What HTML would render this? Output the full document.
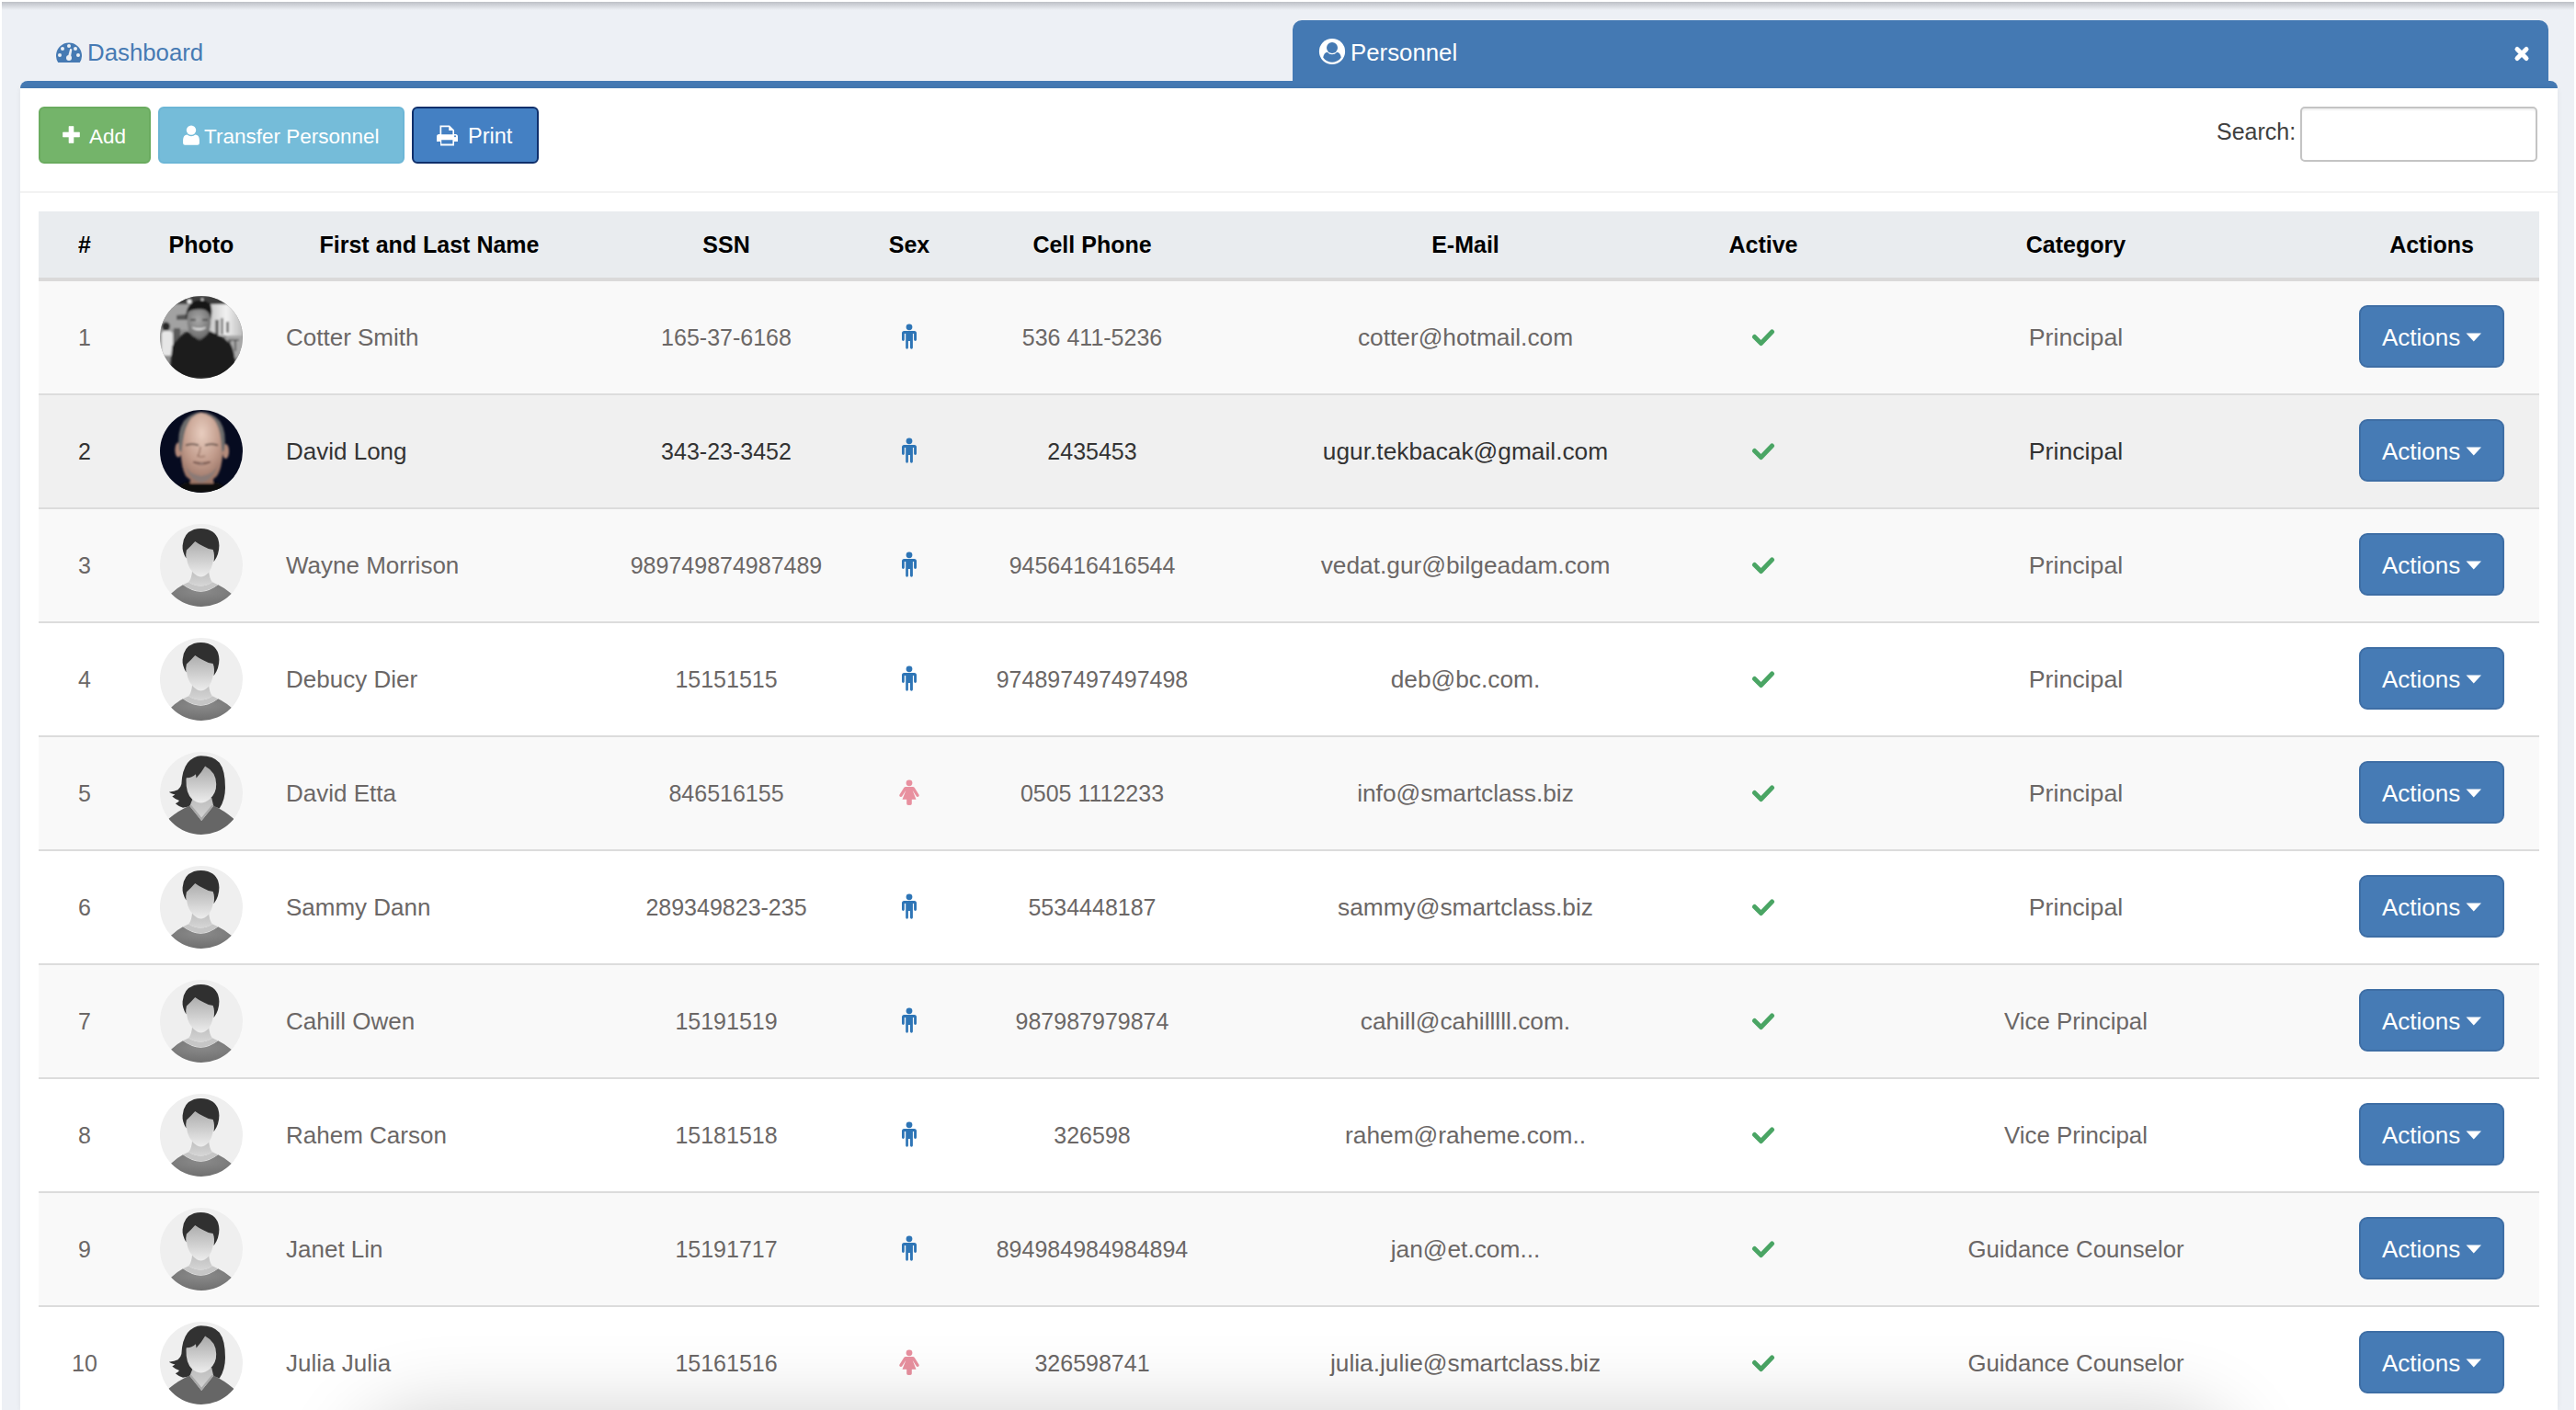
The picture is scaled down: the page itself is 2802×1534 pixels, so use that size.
<!DOCTYPE html>
<html><head><meta charset="utf-8"><title>Personnel</title>
<style>
html,body{margin:0;padding:0}
body{width:2802px;height:1534px;overflow:hidden;position:relative;background:#edf0f5;font-family:"Liberation Sans",sans-serif}
.a{position:absolute}
.t{position:absolute;white-space:nowrap;line-height:26px;height:26px}
.c{text-align:center}
.b{font-size:26px;color:#6b6766}
.hv{color:#333}
.n{font-size:25px}
.tx{font-size:26.8px}
.nm{font-size:26px}
.em{font-size:26.3px}
.cp{font-size:26.7px}
.cv{font-size:25.8px}
.h{font-size:25px;font-weight:bold;color:#000;line-height:26px}
.row{position:absolute;left:42px;width:2720px;height:122px;border-bottom:2px solid #dcdcdc}
.btn{position:absolute;box-sizing:border-box;border-radius:6px}
</style></head><body>

<div class="a" style="left:0;top:0;width:2802px;height:2px;background:#fff"></div>
<div class="a" style="left:0;top:2px;width:2802px;height:9px;background:linear-gradient(rgba(150,153,160,0.55),rgba(237,240,245,0))"></div>
<div class="a" style="left:0;top:0;width:2px;height:1534px;background:#fff"></div>
<div class="a" style="left:2800px;top:0;width:2px;height:1534px;background:#fff"></div>
<svg class="a" style="left:61px;top:45px" width="28" height="24" viewBox="0 0 28 24"><path d="M2.2 23 A14 14 0 1 1 25.8 23 Z" fill="#467ab3"/><g fill="#edf0f5"><circle cx="14" cy="5" r="2"/><circle cx="7" cy="8" r="2"/><circle cx="21" cy="8" r="2"/><circle cx="4" cy="15" r="2"/><circle cx="24" cy="15" r="2"/><circle cx="14" cy="18" r="3"/><path d="M15.2 8 L17.4 8.5 L15.8 18 L12.8 17.3 Z"/></g></svg>
<div class="t" style="left:95px;top:43.8px;font-size:25.8px;color:#467ab3">Dashboard</div>
<div class="a" style="left:1406px;top:22px;width:1366px;height:74px;background:#4479b3;border-radius:10px 10px 0 0"></div>
<svg class="a" style="left:1434px;top:41px" width="30" height="30" viewBox="0 0 30 30"><defs><clipPath id="ucc"><circle cx="15" cy="15" r="11.8"/></clipPath></defs><circle cx="15" cy="15" r="14.1" fill="#fff"/><g clip-path="url(#ucc)"><path d="M4.6 30 L5.1 22 Q6 16.3 9.8 15.7 Q12 18.3 15 18.3 Q18 18.3 20.2 15.7 Q24 16.3 24.9 22 L25.4 30 Z" fill="#4479b3"/></g><circle cx="15" cy="10.9" r="6" fill="#4479b3"/></svg>
<div class="t" style="left:1469px;top:43.8px;font-size:25.8px;color:#fff">Personnel</div>
<svg class="a" style="left:2733px;top:48px" width="20" height="21" viewBox="0 0 20 21"><path d="M5 5.5 L15 15.5 M15 5.5 L5 15.5" stroke="#fff" stroke-width="5" stroke-linecap="round"/></svg>
<div class="a" style="left:22px;top:88px;width:2760px;height:8px;background:#4479b3;border-radius:8px 8px 0 0"></div>
<div class="a" style="left:22px;top:96px;width:2760px;height:1438px;background:#fff;box-shadow:0 0 6px rgba(0,0,0,0.06)"></div>
<div class="a" style="left:22px;top:208px;width:2760px;height:2px;background:#f2f2f2"></div>
<div class="btn" style="left:42px;top:116px;width:122px;height:62px;background:#74b46a;border:2px solid #6aab5f"></div>
<svg class="a" style="left:67px;top:136px" width="21" height="21" viewBox="0 0 21 21"><path d="M8 1.5h5v6.5h6.5v5H13v6.5H8V13H1.5V8H8z" fill="#fff" stroke="#fff" stroke-width="0.6" stroke-linejoin="round"/></svg>
<div class="t" style="left:97px;top:135.5px;font-size:22.5px;color:#fff">Add</div>
<div class="btn" style="left:172px;top:116px;width:268px;height:62px;background:#75bcd9;border:2px solid #6cb6d6"></div>
<svg class="a" style="left:198px;top:136px" width="20" height="23" viewBox="0 0 20 23"><circle cx="10" cy="5.6" r="5.2" fill="#fff"/><path d="M5.5 10.4 Q7.5 12.2 10 12.2 Q12.5 12.2 14.5 10.4 Q18.6 10.8 18.9 16 L18.9 19.8 Q18.9 21.8 16.9 21.8 L3.1 21.8 Q1.1 21.8 1.1 19.8 L1.1 16 Q1.4 10.8 5.5 10.4 Z" fill="#fff"/></svg>
<div class="t" style="left:222px;top:135.5px;font-size:22.5px;color:#fff">Transfer Personnel</div>
<div class="btn" style="left:448px;top:116px;width:138px;height:62px;background:#4480c3;border:2px solid #0f2f6b"></div>
<svg class="a" style="left:474px;top:136px" width="25" height="23" viewBox="0 0 25 23"><path d="M4.5 0.5h10.5l5 5v4.5h1.5q2.5 0 2.5 2.5v5.5h-4v4.5h-15v-4.5h-4v-5.5q0-2.5 2.5-2.5h1z M6.2 2.2v8h12.2v-4.2h-4.2v-3.8z M6.2 16.2v4.4h12.2v-4.4z" fill="#fff" fill-rule="evenodd"/><circle cx="21" cy="12.2" r="1" fill="#4480c3"/></svg>
<div class="t" style="left:509px;top:134.8px;font-size:23.5px;color:#fff">Print</div>
<div class="t" style="left:2411px;top:129.5px;font-size:25px;color:#404040">Search:</div>
<div class="a" style="left:2502px;top:116px;width:258px;height:60px;box-sizing:border-box;border:2px solid #c4c4c4;border-radius:5px;background:#fff;box-shadow:inset 0 2px 2px rgba(0,0,0,0.06)"></div>
<div class="a" style="left:42px;top:230px;width:2720px;height:72px;background:#e9ecef;border-bottom:4px solid #dad9d9"></div>
<div class="t h c" style="left:42.0px;top:253px;width:100px">#</div>
<div class="t h c" style="left:119.0px;top:253px;width:200px">Photo</div>
<div class="t h c" style="left:267.0px;top:253px;width:400px">First and Last Name</div>
<div class="t h c" style="left:690.0px;top:253px;width:200px">SSN</div>
<div class="t h c" style="left:889.0px;top:253px;width:200px">Sex</div>
<div class="t h c" style="left:1038.0px;top:253px;width:300px">Cell Phone</div>
<div class="t h c" style="left:1444.0px;top:253px;width:300px">E-Mail</div>
<div class="t h c" style="left:1818.0px;top:253px;width:200px">Active</div>
<div class="t h c" style="left:2108.0px;top:253px;width:300px">Category</div>
<div class="t h c" style="left:2495.0px;top:253px;width:300px">Actions</div>
<div class="row" style="top:306px;background:#f9f9f9;border-bottom:2px solid #dcdcdc"></div>
<div class="t b c n" style="left:42.0px;top:354px;width:100px">1</div>
<div class="a" style="left:174px;top:322px;width:90px;height:90px"><svg width="90" height="90" viewBox="0 0 90 90"><defs><clipPath id="cp1"><circle cx="45" cy="45" r="45"/></clipPath>
<filter id="bl1" x="-10%" y="-10%" width="120%" height="120%"><feGaussianBlur stdDeviation="0.9"/></filter>
<radialGradient id="fc1" cx="0.45" cy="0.4" r="0.65"><stop offset="0" stop-color="#a8a8a8"/><stop offset="1" stop-color="#6a6a6a"/></radialGradient>
<linearGradient id="br1" x1="0" y1="0" x2="1" y2="0"><stop offset="0" stop-color="#c8c8c8"/><stop offset="0.5" stop-color="#f2f2f2"/><stop offset="1" stop-color="#bcbcbc"/></linearGradient></defs>
<g clip-path="url(#cp1)"><rect width="90" height="90" fill="#8c8c8c"/><g filter="url(#bl1)">
<rect x="0" y="0" width="90" height="9" fill="#3c3c3c"/>
<circle cx="32" cy="6" r="2.5" fill="#f0f0f0"/><circle cx="46" cy="4" r="1.5" fill="#ddd"/>
<rect x="0" y="9" width="32" height="28" fill="#a2a2a2"/>
<path d="M18 21 L30 20 L30 26 L18 26 Z" fill="#555"/>
<rect x="54" y="9" width="36" height="34" fill="url(#br1)"/>
<rect x="60" y="26" width="4" height="16" fill="#6a6a6a"/><rect x="66" y="24" width="3" height="18" fill="#888"/><rect x="72" y="28" width="3" height="12" fill="#777"/>
<rect x="72" y="43" width="18" height="24" fill="#a8a8a8"/>
<path d="M74 48 L86 48 M76 48 L76 62 M82 48 L82 60" stroke="#333" stroke-width="1.2"/>
<rect x="1.6" y="38" width="12.4" height="27" rx="4" fill="#e6e6e6"/>
<circle cx="6.5" cy="33" r="4.5" fill="#2a2a2a"/>
<rect x="15" y="35" width="7" height="31" fill="#5a5a5a"/>
<path d="M10 90 L13.3 54.6 Q20 44 28.9 39 Q42 45 54.6 38.2 Q68 44 75.7 50.7 Q80 56 81.1 66.3 L84 90 Z" fill="#1f1f1f"/>
<path d="M35 36 Q36 46 43 48 Q50 46 52 36 Z" fill="#5e5e5e"/>
<path d="M29.6 24 Q29.4 40 36 44 Q42.5 47.5 49 44 Q55.6 40 55.4 24 Q55 13 42.5 13 Q30 13 29.6 24 Z" fill="url(#fc1)"/>
<path d="M28.5 26 Q27 9 40 5 Q50 3.8 55 9 Q57.5 15 55.4 25 Q54 16 47 14.5 Q37 13.5 31 17 Q29.5 21 28.5 26 Z" fill="#171717"/>
<path d="M35.5 34.5 Q42 39 49.5 34.5 Q42 37 35.5 34.5 Z" fill="#e8e8e8" stroke="#e8e8e8" stroke-width="1.2"/>
<path d="M33 26 L39 26 M46 26 L52 26" stroke="#3a3a3a" stroke-width="1.6"/>
</g></g></svg></div>
<div class="t b nm" style="left:311px;top:354px">Cotter Smith</div>
<div class="t b c n" style="left:590.0px;top:354px;width:400px">165-37-6168</div>
<div class="a" style="left:980px;top:351px"><svg width="18" height="30" viewBox="0 0 18 30"><circle cx="9" cy="4.8" r="3.4" fill="#2e75b6"/><path d="M3.5 9 H14.5 Q17 9 17 11.5 V18.5 Q17 19.9 15.55 19.9 Q14.1 19.9 14.1 18.5 V12 H12.9 V27.3 Q12.9 28.7 11.45 28.7 Q10 28.7 10 27.3 V19.9 H7.9 V27.3 Q7.9 28.7 6.55 28.7 Q5.2 28.7 5.2 27.3 V12 H3.8 V18.5 Q3.8 19.9 2.4 19.9 Q1 19.9 1 18.5 V11.5 Q1 9 3.5 9 Z" fill="#2e75b6"/></svg></div>
<div class="t b c n" style="left:988.0px;top:354px;width:400px">536 411-5236</div>
<div class="t b c em" style="left:1344.0px;top:354px;width:500px">cotter@hotmail.com</div>
<div class="a" style="left:1905px;top:357px"><svg width="26" height="20" viewBox="0 0 26 20"><path d="M3.5 9.5 L10.5 16.5 L22.5 4" fill="none" stroke="#4aa564" stroke-width="5" stroke-linejoin="round" stroke-linecap="round"/></svg></div>
<div class="t b c cp" style="left:2058.0px;top:354px;width:400px">Principal</div>
<div class="btn" style="left:2566px;top:332px;width:158px;height:68px;background:#467bb5;border:2px solid #3e6ea5;border-radius:9px"></div>
<div class="t" style="left:2591px;top:354px;font-size:26px;color:#fff">Actions</div>
<svg class="a" style="left:2682px;top:362px" width="18" height="10" viewBox="0 0 18 10"><path d="M0.5 0.5 H17 L8.75 9.5 Z" fill="#fff"/></svg>
<div class="row" style="top:430px;background:#f0f0f0;border-bottom:2px solid #dcdcdc"></div>
<div class="t b c hv n" style="left:42.0px;top:478px;width:100px">2</div>
<div class="a" style="left:174px;top:446px;width:90px;height:90px"><svg width="90" height="90" viewBox="0 0 90 90"><defs><clipPath id="cp2"><circle cx="45" cy="45" r="45"/></clipPath>
<filter id="bl2" x="-10%" y="-10%" width="120%" height="120%"><feGaussianBlur stdDeviation="0.8"/></filter>
<radialGradient id="sk2" cx="0.5" cy="0.3" r="0.7"><stop offset="0" stop-color="#e8cdbf"/><stop offset="0.6" stop-color="#c29c8c"/><stop offset="1" stop-color="#9a7466"/></radialGradient></defs>
<g clip-path="url(#cp2)"><rect width="90" height="90" fill="#060b20"/><g filter="url(#bl2)">
<path d="M16 90 Q20 80 32 78 L58 78 Q70 80 74 90 Z" fill="#101010"/>
<rect x="33" y="66" width="25" height="14" fill="#9c7666"/>
<ellipse cx="20" cy="43.5" rx="3.6" ry="8" fill="#b48a7a"/>
<ellipse cx="71.5" cy="45" rx="3.6" ry="8" fill="#b48a7a"/>
<path d="M22.5 40 Q22 8 45 2.5 Q68 8 68.5 40 Q68.5 62 62 72 Q55 79 45 79 Q35 79 28 72 Q22.5 62 22.5 40 Z" fill="url(#sk2)"/>
<path d="M21 44 Q18 24 26 12 Q34 3 45 2 Q40 4 34 9 Q27 18 25 34 Q24 40 23.5 46 Z" fill="#6c6c6c"/>
<path d="M70 44 Q73 24 65 12 Q57 3 46 2 Q52 4 58 9 Q65 18 66.5 34 Q67 40 67.5 46 Z" fill="#6c6c6c"/>
<path d="M27 58 Q32 77 45 79 Q58 77 63 58 Q60 70 45 72 Q30 70 27 58 Z" fill="#8a7a76"/>
<path d="M36 56.5 Q45 62 55 56.5 Q45 59 36 56.5 Z" fill="#f0e0d8" stroke="#5a3830" stroke-width="1"/>
<path d="M28 38.5 Q35 36 42 38.5 M49 38.5 Q56 36 63 38.5" stroke="#4a3a34" stroke-width="1.4" fill="none"/>
<path d="M44 40 Q43 48 41 50 Q45 52 49 50" stroke="#8a6456" stroke-width="1.2" fill="none"/>
</g></g></svg></div>
<div class="t b hv nm" style="left:311px;top:478px">David Long</div>
<div class="t b c hv n" style="left:590.0px;top:478px;width:400px">343-23-3452</div>
<div class="a" style="left:980px;top:475px"><svg width="18" height="30" viewBox="0 0 18 30"><circle cx="9" cy="4.8" r="3.4" fill="#2e75b6"/><path d="M3.5 9 H14.5 Q17 9 17 11.5 V18.5 Q17 19.9 15.55 19.9 Q14.1 19.9 14.1 18.5 V12 H12.9 V27.3 Q12.9 28.7 11.45 28.7 Q10 28.7 10 27.3 V19.9 H7.9 V27.3 Q7.9 28.7 6.55 28.7 Q5.2 28.7 5.2 27.3 V12 H3.8 V18.5 Q3.8 19.9 2.4 19.9 Q1 19.9 1 18.5 V11.5 Q1 9 3.5 9 Z" fill="#2e75b6"/></svg></div>
<div class="t b c hv n" style="left:988.0px;top:478px;width:400px">2435453</div>
<div class="t b c hv em" style="left:1344.0px;top:478px;width:500px">ugur.tekbacak@gmail.com</div>
<div class="a" style="left:1905px;top:481px"><svg width="26" height="20" viewBox="0 0 26 20"><path d="M3.5 9.5 L10.5 16.5 L22.5 4" fill="none" stroke="#4aa564" stroke-width="5" stroke-linejoin="round" stroke-linecap="round"/></svg></div>
<div class="t b c hv cp" style="left:2058.0px;top:478px;width:400px">Principal</div>
<div class="btn" style="left:2566px;top:456px;width:158px;height:68px;background:#467bb5;border:2px solid #3e6ea5;border-radius:9px"></div>
<div class="t" style="left:2591px;top:478px;font-size:26px;color:#fff">Actions</div>
<svg class="a" style="left:2682px;top:486px" width="18" height="10" viewBox="0 0 18 10"><path d="M0.5 0.5 H17 L8.75 9.5 Z" fill="#fff"/></svg>
<div class="row" style="top:554px;background:#f9f9f9;border-bottom:2px solid #dcdcdc"></div>
<div class="t b c n" style="left:42.0px;top:602px;width:100px">3</div>
<div class="a" style="left:174px;top:570px;width:90px;height:90px"><svg width="90" height="90" viewBox="0 0 90 90"><defs><clipPath id="cp2"><circle cx="45" cy="45" r="45"/></clipPath>
<linearGradient id="fg2" x1="0" y1="0" x2="0" y2="1"><stop offset="0" stop-color="#a8a8a8"/><stop offset="1" stop-color="#ededed"/></linearGradient>
<linearGradient id="ng2" x1="0" y1="0" x2="0" y2="1"><stop offset="0" stop-color="#bdbdbd"/><stop offset="1" stop-color="#d6d6d6"/></linearGradient>
<radialGradient id="sg2" cx="0.5" cy="0.3" r="0.7"><stop offset="0" stop-color="#8a8a8a"/><stop offset="1" stop-color="#6f6f6f"/></radialGradient></defs>
<g clip-path="url(#cp2)"><rect width="90" height="90" fill="#efefef"/>
<path d="M3 90 L12.1 75.7 Q18 70 25 66.3 Q44.5 81 63.2 66.3 Q71 70 77.6 75.7 L87 90 Z" fill="url(#sg2)"/>
<path d="M25 66.3 L31.2 63.2 Q44.5 72 56.9 63.2 L63.2 66.3 Q44.5 80 25 66.3 Z" fill="#c6c6c6"/>
<path d="M35.1 50 L53 50 Q53.5 59 56.9 63.2 Q44.5 72 31.2 63.2 Q34.8 59 35.1 50 Z" fill="url(#ng2)"/>
<path d="M28.5 28 Q28 45 36 53 Q41 57.5 44.5 57.5 Q48 57.5 53 53 Q59 45 58.5 28 Q58 16 44 16 Q29 16 28.5 28 Z" fill="url(#fg2)"/>
<path d="M28.5 37.4 Q24 30 24.6 23.4 Q25.5 10 37 6 Q44.5 4.2 52 6 Q64 10 64.4 23.4 Q64.5 33 58.5 41.3 Q59.5 33 57.7 28.1 Q52 27.5 47.6 24.6 Q42 22 38.2 19.1 Q33 25 28.9 28.5 Q28 33 28.5 37.4 Z" fill="#303030"/>
</g></svg></div>
<div class="t b nm" style="left:311px;top:602px">Wayne Morrison</div>
<div class="t b c n" style="left:590.0px;top:602px;width:400px">989749874987489</div>
<div class="a" style="left:980px;top:599px"><svg width="18" height="30" viewBox="0 0 18 30"><circle cx="9" cy="4.8" r="3.4" fill="#2e75b6"/><path d="M3.5 9 H14.5 Q17 9 17 11.5 V18.5 Q17 19.9 15.55 19.9 Q14.1 19.9 14.1 18.5 V12 H12.9 V27.3 Q12.9 28.7 11.45 28.7 Q10 28.7 10 27.3 V19.9 H7.9 V27.3 Q7.9 28.7 6.55 28.7 Q5.2 28.7 5.2 27.3 V12 H3.8 V18.5 Q3.8 19.9 2.4 19.9 Q1 19.9 1 18.5 V11.5 Q1 9 3.5 9 Z" fill="#2e75b6"/></svg></div>
<div class="t b c n" style="left:988.0px;top:602px;width:400px">9456416416544</div>
<div class="t b c em" style="left:1344.0px;top:602px;width:500px">vedat.gur@bilgeadam.com</div>
<div class="a" style="left:1905px;top:605px"><svg width="26" height="20" viewBox="0 0 26 20"><path d="M3.5 9.5 L10.5 16.5 L22.5 4" fill="none" stroke="#4aa564" stroke-width="5" stroke-linejoin="round" stroke-linecap="round"/></svg></div>
<div class="t b c cp" style="left:2058.0px;top:602px;width:400px">Principal</div>
<div class="btn" style="left:2566px;top:580px;width:158px;height:68px;background:#467bb5;border:2px solid #3e6ea5;border-radius:9px"></div>
<div class="t" style="left:2591px;top:602px;font-size:26px;color:#fff">Actions</div>
<svg class="a" style="left:2682px;top:610px" width="18" height="10" viewBox="0 0 18 10"><path d="M0.5 0.5 H17 L8.75 9.5 Z" fill="#fff"/></svg>
<div class="row" style="top:678px;background:#fff;border-bottom:2px solid #dcdcdc"></div>
<div class="t b c n" style="left:42.0px;top:726px;width:100px">4</div>
<div class="a" style="left:174px;top:694px;width:90px;height:90px"><svg width="90" height="90" viewBox="0 0 90 90"><defs><clipPath id="cp3"><circle cx="45" cy="45" r="45"/></clipPath>
<linearGradient id="fg3" x1="0" y1="0" x2="0" y2="1"><stop offset="0" stop-color="#a8a8a8"/><stop offset="1" stop-color="#ededed"/></linearGradient>
<linearGradient id="ng3" x1="0" y1="0" x2="0" y2="1"><stop offset="0" stop-color="#bdbdbd"/><stop offset="1" stop-color="#d6d6d6"/></linearGradient>
<radialGradient id="sg3" cx="0.5" cy="0.3" r="0.7"><stop offset="0" stop-color="#8a8a8a"/><stop offset="1" stop-color="#6f6f6f"/></radialGradient></defs>
<g clip-path="url(#cp3)"><rect width="90" height="90" fill="#efefef"/>
<path d="M3 90 L12.1 75.7 Q18 70 25 66.3 Q44.5 81 63.2 66.3 Q71 70 77.6 75.7 L87 90 Z" fill="url(#sg3)"/>
<path d="M25 66.3 L31.2 63.2 Q44.5 72 56.9 63.2 L63.2 66.3 Q44.5 80 25 66.3 Z" fill="#c6c6c6"/>
<path d="M35.1 50 L53 50 Q53.5 59 56.9 63.2 Q44.5 72 31.2 63.2 Q34.8 59 35.1 50 Z" fill="url(#ng3)"/>
<path d="M28.5 28 Q28 45 36 53 Q41 57.5 44.5 57.5 Q48 57.5 53 53 Q59 45 58.5 28 Q58 16 44 16 Q29 16 28.5 28 Z" fill="url(#fg3)"/>
<path d="M28.5 37.4 Q24 30 24.6 23.4 Q25.5 10 37 6 Q44.5 4.2 52 6 Q64 10 64.4 23.4 Q64.5 33 58.5 41.3 Q59.5 33 57.7 28.1 Q52 27.5 47.6 24.6 Q42 22 38.2 19.1 Q33 25 28.9 28.5 Q28 33 28.5 37.4 Z" fill="#303030"/>
</g></svg></div>
<div class="t b nm" style="left:311px;top:726px">Debucy Dier</div>
<div class="t b c n" style="left:590.0px;top:726px;width:400px">15151515</div>
<div class="a" style="left:980px;top:723px"><svg width="18" height="30" viewBox="0 0 18 30"><circle cx="9" cy="4.8" r="3.4" fill="#2e75b6"/><path d="M3.5 9 H14.5 Q17 9 17 11.5 V18.5 Q17 19.9 15.55 19.9 Q14.1 19.9 14.1 18.5 V12 H12.9 V27.3 Q12.9 28.7 11.45 28.7 Q10 28.7 10 27.3 V19.9 H7.9 V27.3 Q7.9 28.7 6.55 28.7 Q5.2 28.7 5.2 27.3 V12 H3.8 V18.5 Q3.8 19.9 2.4 19.9 Q1 19.9 1 18.5 V11.5 Q1 9 3.5 9 Z" fill="#2e75b6"/></svg></div>
<div class="t b c n" style="left:988.0px;top:726px;width:400px">974897497497498</div>
<div class="t b c em" style="left:1344.0px;top:726px;width:500px">deb@bc.com.</div>
<div class="a" style="left:1905px;top:729px"><svg width="26" height="20" viewBox="0 0 26 20"><path d="M3.5 9.5 L10.5 16.5 L22.5 4" fill="none" stroke="#4aa564" stroke-width="5" stroke-linejoin="round" stroke-linecap="round"/></svg></div>
<div class="t b c cp" style="left:2058.0px;top:726px;width:400px">Principal</div>
<div class="btn" style="left:2566px;top:704px;width:158px;height:68px;background:#467bb5;border:2px solid #3e6ea5;border-radius:9px"></div>
<div class="t" style="left:2591px;top:726px;font-size:26px;color:#fff">Actions</div>
<svg class="a" style="left:2682px;top:734px" width="18" height="10" viewBox="0 0 18 10"><path d="M0.5 0.5 H17 L8.75 9.5 Z" fill="#fff"/></svg>
<div class="row" style="top:802px;background:#f9f9f9;border-bottom:2px solid #dcdcdc"></div>
<div class="t b c n" style="left:42.0px;top:850px;width:100px">5</div>
<div class="a" style="left:174px;top:818px;width:90px;height:90px"><svg width="90" height="90" viewBox="0 0 90 90"><defs><clipPath id="cp4"><circle cx="45" cy="45" r="45"/></clipPath>
<linearGradient id="fg4" x1="0" y1="0" x2="0" y2="1"><stop offset="0" stop-color="#a8a8a8"/><stop offset="1" stop-color="#ededed"/></linearGradient>
<linearGradient id="ng4" x1="0" y1="0" x2="0" y2="1"><stop offset="0" stop-color="#bdbdbd"/><stop offset="1" stop-color="#d6d6d6"/></linearGradient></defs>
<g clip-path="url(#cp4)"><rect width="90" height="90" fill="#efefef"/>
<path d="M35.9 57.7 Q30 60 25 60.8 Q20 59 16.8 56.2 Q20 55 21 53 Q16 51 13.3 48.4 Q15 47.5 16.4 46.4 Q12 45.5 9.75 43.7 Q16 43 19.5 41.3 Q23 38 23.4 35 Q24 20 30 12 Q37 4.3 44.5 4.3 Q58 4.3 64.7 11.7 Q71 20 71 39 Q71 52 64.7 61.6 L56.2 58.5 Z" fill="#323232"/>
<path d="M35.9 50 L56.2 50 L58.5 60 L45.2 76 L32 60 Z" fill="url(#ng4)"/>
<path d="M28.5 30 Q28 45 35 51.5 Q40 55.4 44.5 55.4 Q49 55.4 54 51.5 Q61.5 45 61.2 35 Q61 22 49.1 15.6 Q45 23 39.5 28.5 L39 24.2 Q34 28.5 28.9 28.1 Z" fill="url(#fg4)"/>
<path d="M0 90 L9.75 72.5 Q20 64 32 58.5 L45.2 74.9 L58.5 58.5 Q70 64 79.9 72.5 L90 90 Z" fill="#666666"/>
<path d="M32 58.5 L45.2 74.9 L58.5 58.5 L56.5 57.8 L45.2 71.5 L34 57.8 Z" fill="#a9a9a9"/>
</g></svg></div>
<div class="t b nm" style="left:311px;top:850px">David Etta</div>
<div class="t b c n" style="left:590.0px;top:850px;width:400px">846516155</div>
<div class="a" style="left:978px;top:847px"><svg width="22" height="30" viewBox="0 0 22 30"><circle cx="11" cy="4.8" r="3.4" fill="#e8909f"/><path d="M7 9 H15 Q16 9 16.8 10 L21.5 17.5 Q22.2 19 20.8 19.8 Q19.5 20.4 18.7 19.2 L14.6 12.8 L18.5 22.7 H13.8 V27.5 Q13.8 29 11 29 Q8.2 29 8.2 27.5 V22.7 H3.5 L7.4 12.8 L3.3 19.2 Q2.5 20.4 1.2 19.8 Q-0.2 19 0.5 17.5 L5.2 10 Q6 9 7 9 Z" fill="#e8909f"/></svg></div>
<div class="t b c n" style="left:988.0px;top:850px;width:400px">0505 1112233</div>
<div class="t b c em" style="left:1344.0px;top:850px;width:500px">info@smartclass.biz</div>
<div class="a" style="left:1905px;top:853px"><svg width="26" height="20" viewBox="0 0 26 20"><path d="M3.5 9.5 L10.5 16.5 L22.5 4" fill="none" stroke="#4aa564" stroke-width="5" stroke-linejoin="round" stroke-linecap="round"/></svg></div>
<div class="t b c cp" style="left:2058.0px;top:850px;width:400px">Principal</div>
<div class="btn" style="left:2566px;top:828px;width:158px;height:68px;background:#467bb5;border:2px solid #3e6ea5;border-radius:9px"></div>
<div class="t" style="left:2591px;top:850px;font-size:26px;color:#fff">Actions</div>
<svg class="a" style="left:2682px;top:858px" width="18" height="10" viewBox="0 0 18 10"><path d="M0.5 0.5 H17 L8.75 9.5 Z" fill="#fff"/></svg>
<div class="row" style="top:926px;background:#fff;border-bottom:2px solid #dcdcdc"></div>
<div class="t b c n" style="left:42.0px;top:974px;width:100px">6</div>
<div class="a" style="left:174px;top:942px;width:90px;height:90px"><svg width="90" height="90" viewBox="0 0 90 90"><defs><clipPath id="cp5"><circle cx="45" cy="45" r="45"/></clipPath>
<linearGradient id="fg5" x1="0" y1="0" x2="0" y2="1"><stop offset="0" stop-color="#a8a8a8"/><stop offset="1" stop-color="#ededed"/></linearGradient>
<linearGradient id="ng5" x1="0" y1="0" x2="0" y2="1"><stop offset="0" stop-color="#bdbdbd"/><stop offset="1" stop-color="#d6d6d6"/></linearGradient>
<radialGradient id="sg5" cx="0.5" cy="0.3" r="0.7"><stop offset="0" stop-color="#8a8a8a"/><stop offset="1" stop-color="#6f6f6f"/></radialGradient></defs>
<g clip-path="url(#cp5)"><rect width="90" height="90" fill="#efefef"/>
<path d="M3 90 L12.1 75.7 Q18 70 25 66.3 Q44.5 81 63.2 66.3 Q71 70 77.6 75.7 L87 90 Z" fill="url(#sg5)"/>
<path d="M25 66.3 L31.2 63.2 Q44.5 72 56.9 63.2 L63.2 66.3 Q44.5 80 25 66.3 Z" fill="#c6c6c6"/>
<path d="M35.1 50 L53 50 Q53.5 59 56.9 63.2 Q44.5 72 31.2 63.2 Q34.8 59 35.1 50 Z" fill="url(#ng5)"/>
<path d="M28.5 28 Q28 45 36 53 Q41 57.5 44.5 57.5 Q48 57.5 53 53 Q59 45 58.5 28 Q58 16 44 16 Q29 16 28.5 28 Z" fill="url(#fg5)"/>
<path d="M28.5 37.4 Q24 30 24.6 23.4 Q25.5 10 37 6 Q44.5 4.2 52 6 Q64 10 64.4 23.4 Q64.5 33 58.5 41.3 Q59.5 33 57.7 28.1 Q52 27.5 47.6 24.6 Q42 22 38.2 19.1 Q33 25 28.9 28.5 Q28 33 28.5 37.4 Z" fill="#303030"/>
</g></svg></div>
<div class="t b nm" style="left:311px;top:974px">Sammy Dann</div>
<div class="t b c n" style="left:590.0px;top:974px;width:400px">289349823-235</div>
<div class="a" style="left:980px;top:971px"><svg width="18" height="30" viewBox="0 0 18 30"><circle cx="9" cy="4.8" r="3.4" fill="#2e75b6"/><path d="M3.5 9 H14.5 Q17 9 17 11.5 V18.5 Q17 19.9 15.55 19.9 Q14.1 19.9 14.1 18.5 V12 H12.9 V27.3 Q12.9 28.7 11.45 28.7 Q10 28.7 10 27.3 V19.9 H7.9 V27.3 Q7.9 28.7 6.55 28.7 Q5.2 28.7 5.2 27.3 V12 H3.8 V18.5 Q3.8 19.9 2.4 19.9 Q1 19.9 1 18.5 V11.5 Q1 9 3.5 9 Z" fill="#2e75b6"/></svg></div>
<div class="t b c n" style="left:988.0px;top:974px;width:400px">5534448187</div>
<div class="t b c em" style="left:1344.0px;top:974px;width:500px">sammy@smartclass.biz</div>
<div class="a" style="left:1905px;top:977px"><svg width="26" height="20" viewBox="0 0 26 20"><path d="M3.5 9.5 L10.5 16.5 L22.5 4" fill="none" stroke="#4aa564" stroke-width="5" stroke-linejoin="round" stroke-linecap="round"/></svg></div>
<div class="t b c cp" style="left:2058.0px;top:974px;width:400px">Principal</div>
<div class="btn" style="left:2566px;top:952px;width:158px;height:68px;background:#467bb5;border:2px solid #3e6ea5;border-radius:9px"></div>
<div class="t" style="left:2591px;top:974px;font-size:26px;color:#fff">Actions</div>
<svg class="a" style="left:2682px;top:982px" width="18" height="10" viewBox="0 0 18 10"><path d="M0.5 0.5 H17 L8.75 9.5 Z" fill="#fff"/></svg>
<div class="row" style="top:1050px;background:#f9f9f9;border-bottom:2px solid #dcdcdc"></div>
<div class="t b c n" style="left:42.0px;top:1098px;width:100px">7</div>
<div class="a" style="left:174px;top:1066px;width:90px;height:90px"><svg width="90" height="90" viewBox="0 0 90 90"><defs><clipPath id="cp6"><circle cx="45" cy="45" r="45"/></clipPath>
<linearGradient id="fg6" x1="0" y1="0" x2="0" y2="1"><stop offset="0" stop-color="#a8a8a8"/><stop offset="1" stop-color="#ededed"/></linearGradient>
<linearGradient id="ng6" x1="0" y1="0" x2="0" y2="1"><stop offset="0" stop-color="#bdbdbd"/><stop offset="1" stop-color="#d6d6d6"/></linearGradient>
<radialGradient id="sg6" cx="0.5" cy="0.3" r="0.7"><stop offset="0" stop-color="#8a8a8a"/><stop offset="1" stop-color="#6f6f6f"/></radialGradient></defs>
<g clip-path="url(#cp6)"><rect width="90" height="90" fill="#efefef"/>
<path d="M3 90 L12.1 75.7 Q18 70 25 66.3 Q44.5 81 63.2 66.3 Q71 70 77.6 75.7 L87 90 Z" fill="url(#sg6)"/>
<path d="M25 66.3 L31.2 63.2 Q44.5 72 56.9 63.2 L63.2 66.3 Q44.5 80 25 66.3 Z" fill="#c6c6c6"/>
<path d="M35.1 50 L53 50 Q53.5 59 56.9 63.2 Q44.5 72 31.2 63.2 Q34.8 59 35.1 50 Z" fill="url(#ng6)"/>
<path d="M28.5 28 Q28 45 36 53 Q41 57.5 44.5 57.5 Q48 57.5 53 53 Q59 45 58.5 28 Q58 16 44 16 Q29 16 28.5 28 Z" fill="url(#fg6)"/>
<path d="M28.5 37.4 Q24 30 24.6 23.4 Q25.5 10 37 6 Q44.5 4.2 52 6 Q64 10 64.4 23.4 Q64.5 33 58.5 41.3 Q59.5 33 57.7 28.1 Q52 27.5 47.6 24.6 Q42 22 38.2 19.1 Q33 25 28.9 28.5 Q28 33 28.5 37.4 Z" fill="#303030"/>
</g></svg></div>
<div class="t b nm" style="left:311px;top:1098px">Cahill Owen</div>
<div class="t b c n" style="left:590.0px;top:1098px;width:400px">15191519</div>
<div class="a" style="left:980px;top:1095px"><svg width="18" height="30" viewBox="0 0 18 30"><circle cx="9" cy="4.8" r="3.4" fill="#2e75b6"/><path d="M3.5 9 H14.5 Q17 9 17 11.5 V18.5 Q17 19.9 15.55 19.9 Q14.1 19.9 14.1 18.5 V12 H12.9 V27.3 Q12.9 28.7 11.45 28.7 Q10 28.7 10 27.3 V19.9 H7.9 V27.3 Q7.9 28.7 6.55 28.7 Q5.2 28.7 5.2 27.3 V12 H3.8 V18.5 Q3.8 19.9 2.4 19.9 Q1 19.9 1 18.5 V11.5 Q1 9 3.5 9 Z" fill="#2e75b6"/></svg></div>
<div class="t b c n" style="left:988.0px;top:1098px;width:400px">987987979874</div>
<div class="t b c em" style="left:1344.0px;top:1098px;width:500px">cahill@cahilllll.com.</div>
<div class="a" style="left:1905px;top:1101px"><svg width="26" height="20" viewBox="0 0 26 20"><path d="M3.5 9.5 L10.5 16.5 L22.5 4" fill="none" stroke="#4aa564" stroke-width="5" stroke-linejoin="round" stroke-linecap="round"/></svg></div>
<div class="t b c cv" style="left:2058.0px;top:1098px;width:400px">Vice Principal</div>
<div class="btn" style="left:2566px;top:1076px;width:158px;height:68px;background:#467bb5;border:2px solid #3e6ea5;border-radius:9px"></div>
<div class="t" style="left:2591px;top:1098px;font-size:26px;color:#fff">Actions</div>
<svg class="a" style="left:2682px;top:1106px" width="18" height="10" viewBox="0 0 18 10"><path d="M0.5 0.5 H17 L8.75 9.5 Z" fill="#fff"/></svg>
<div class="row" style="top:1174px;background:#fff;border-bottom:2px solid #dcdcdc"></div>
<div class="t b c n" style="left:42.0px;top:1222px;width:100px">8</div>
<div class="a" style="left:174px;top:1190px;width:90px;height:90px"><svg width="90" height="90" viewBox="0 0 90 90"><defs><clipPath id="cp7"><circle cx="45" cy="45" r="45"/></clipPath>
<linearGradient id="fg7" x1="0" y1="0" x2="0" y2="1"><stop offset="0" stop-color="#a8a8a8"/><stop offset="1" stop-color="#ededed"/></linearGradient>
<linearGradient id="ng7" x1="0" y1="0" x2="0" y2="1"><stop offset="0" stop-color="#bdbdbd"/><stop offset="1" stop-color="#d6d6d6"/></linearGradient>
<radialGradient id="sg7" cx="0.5" cy="0.3" r="0.7"><stop offset="0" stop-color="#8a8a8a"/><stop offset="1" stop-color="#6f6f6f"/></radialGradient></defs>
<g clip-path="url(#cp7)"><rect width="90" height="90" fill="#efefef"/>
<path d="M3 90 L12.1 75.7 Q18 70 25 66.3 Q44.5 81 63.2 66.3 Q71 70 77.6 75.7 L87 90 Z" fill="url(#sg7)"/>
<path d="M25 66.3 L31.2 63.2 Q44.5 72 56.9 63.2 L63.2 66.3 Q44.5 80 25 66.3 Z" fill="#c6c6c6"/>
<path d="M35.1 50 L53 50 Q53.5 59 56.9 63.2 Q44.5 72 31.2 63.2 Q34.8 59 35.1 50 Z" fill="url(#ng7)"/>
<path d="M28.5 28 Q28 45 36 53 Q41 57.5 44.5 57.5 Q48 57.5 53 53 Q59 45 58.5 28 Q58 16 44 16 Q29 16 28.5 28 Z" fill="url(#fg7)"/>
<path d="M28.5 37.4 Q24 30 24.6 23.4 Q25.5 10 37 6 Q44.5 4.2 52 6 Q64 10 64.4 23.4 Q64.5 33 58.5 41.3 Q59.5 33 57.7 28.1 Q52 27.5 47.6 24.6 Q42 22 38.2 19.1 Q33 25 28.9 28.5 Q28 33 28.5 37.4 Z" fill="#303030"/>
</g></svg></div>
<div class="t b nm" style="left:311px;top:1222px">Rahem Carson</div>
<div class="t b c n" style="left:590.0px;top:1222px;width:400px">15181518</div>
<div class="a" style="left:980px;top:1219px"><svg width="18" height="30" viewBox="0 0 18 30"><circle cx="9" cy="4.8" r="3.4" fill="#2e75b6"/><path d="M3.5 9 H14.5 Q17 9 17 11.5 V18.5 Q17 19.9 15.55 19.9 Q14.1 19.9 14.1 18.5 V12 H12.9 V27.3 Q12.9 28.7 11.45 28.7 Q10 28.7 10 27.3 V19.9 H7.9 V27.3 Q7.9 28.7 6.55 28.7 Q5.2 28.7 5.2 27.3 V12 H3.8 V18.5 Q3.8 19.9 2.4 19.9 Q1 19.9 1 18.5 V11.5 Q1 9 3.5 9 Z" fill="#2e75b6"/></svg></div>
<div class="t b c n" style="left:988.0px;top:1222px;width:400px">326598</div>
<div class="t b c em" style="left:1344.0px;top:1222px;width:500px">rahem@raheme.com..</div>
<div class="a" style="left:1905px;top:1225px"><svg width="26" height="20" viewBox="0 0 26 20"><path d="M3.5 9.5 L10.5 16.5 L22.5 4" fill="none" stroke="#4aa564" stroke-width="5" stroke-linejoin="round" stroke-linecap="round"/></svg></div>
<div class="t b c cv" style="left:2058.0px;top:1222px;width:400px">Vice Principal</div>
<div class="btn" style="left:2566px;top:1200px;width:158px;height:68px;background:#467bb5;border:2px solid #3e6ea5;border-radius:9px"></div>
<div class="t" style="left:2591px;top:1222px;font-size:26px;color:#fff">Actions</div>
<svg class="a" style="left:2682px;top:1230px" width="18" height="10" viewBox="0 0 18 10"><path d="M0.5 0.5 H17 L8.75 9.5 Z" fill="#fff"/></svg>
<div class="row" style="top:1298px;background:#f9f9f9;border-bottom:2px solid #dcdcdc"></div>
<div class="t b c n" style="left:42.0px;top:1346px;width:100px">9</div>
<div class="a" style="left:174px;top:1314px;width:90px;height:90px"><svg width="90" height="90" viewBox="0 0 90 90"><defs><clipPath id="cp8"><circle cx="45" cy="45" r="45"/></clipPath>
<linearGradient id="fg8" x1="0" y1="0" x2="0" y2="1"><stop offset="0" stop-color="#a8a8a8"/><stop offset="1" stop-color="#ededed"/></linearGradient>
<linearGradient id="ng8" x1="0" y1="0" x2="0" y2="1"><stop offset="0" stop-color="#bdbdbd"/><stop offset="1" stop-color="#d6d6d6"/></linearGradient>
<radialGradient id="sg8" cx="0.5" cy="0.3" r="0.7"><stop offset="0" stop-color="#8a8a8a"/><stop offset="1" stop-color="#6f6f6f"/></radialGradient></defs>
<g clip-path="url(#cp8)"><rect width="90" height="90" fill="#efefef"/>
<path d="M3 90 L12.1 75.7 Q18 70 25 66.3 Q44.5 81 63.2 66.3 Q71 70 77.6 75.7 L87 90 Z" fill="url(#sg8)"/>
<path d="M25 66.3 L31.2 63.2 Q44.5 72 56.9 63.2 L63.2 66.3 Q44.5 80 25 66.3 Z" fill="#c6c6c6"/>
<path d="M35.1 50 L53 50 Q53.5 59 56.9 63.2 Q44.5 72 31.2 63.2 Q34.8 59 35.1 50 Z" fill="url(#ng8)"/>
<path d="M28.5 28 Q28 45 36 53 Q41 57.5 44.5 57.5 Q48 57.5 53 53 Q59 45 58.5 28 Q58 16 44 16 Q29 16 28.5 28 Z" fill="url(#fg8)"/>
<path d="M28.5 37.4 Q24 30 24.6 23.4 Q25.5 10 37 6 Q44.5 4.2 52 6 Q64 10 64.4 23.4 Q64.5 33 58.5 41.3 Q59.5 33 57.7 28.1 Q52 27.5 47.6 24.6 Q42 22 38.2 19.1 Q33 25 28.9 28.5 Q28 33 28.5 37.4 Z" fill="#303030"/>
</g></svg></div>
<div class="t b nm" style="left:311px;top:1346px">Janet Lin</div>
<div class="t b c n" style="left:590.0px;top:1346px;width:400px">15191717</div>
<div class="a" style="left:980px;top:1343px"><svg width="18" height="30" viewBox="0 0 18 30"><circle cx="9" cy="4.8" r="3.4" fill="#2e75b6"/><path d="M3.5 9 H14.5 Q17 9 17 11.5 V18.5 Q17 19.9 15.55 19.9 Q14.1 19.9 14.1 18.5 V12 H12.9 V27.3 Q12.9 28.7 11.45 28.7 Q10 28.7 10 27.3 V19.9 H7.9 V27.3 Q7.9 28.7 6.55 28.7 Q5.2 28.7 5.2 27.3 V12 H3.8 V18.5 Q3.8 19.9 2.4 19.9 Q1 19.9 1 18.5 V11.5 Q1 9 3.5 9 Z" fill="#2e75b6"/></svg></div>
<div class="t b c n" style="left:988.0px;top:1346px;width:400px">894984984984894</div>
<div class="t b c em" style="left:1344.0px;top:1346px;width:500px">jan@et.com...</div>
<div class="a" style="left:1905px;top:1349px"><svg width="26" height="20" viewBox="0 0 26 20"><path d="M3.5 9.5 L10.5 16.5 L22.5 4" fill="none" stroke="#4aa564" stroke-width="5" stroke-linejoin="round" stroke-linecap="round"/></svg></div>
<div class="t b c cv" style="left:2058.0px;top:1346px;width:400px">Guidance Counselor</div>
<div class="btn" style="left:2566px;top:1324px;width:158px;height:68px;background:#467bb5;border:2px solid #3e6ea5;border-radius:9px"></div>
<div class="t" style="left:2591px;top:1346px;font-size:26px;color:#fff">Actions</div>
<svg class="a" style="left:2682px;top:1354px" width="18" height="10" viewBox="0 0 18 10"><path d="M0.5 0.5 H17 L8.75 9.5 Z" fill="#fff"/></svg>
<div class="row" style="top:1422px;background:#fff;border-bottom:none"></div>
<div class="t b c n" style="left:42.0px;top:1470px;width:100px">10</div>
<div class="a" style="left:174px;top:1438px;width:90px;height:90px"><svg width="90" height="90" viewBox="0 0 90 90"><defs><clipPath id="cp9"><circle cx="45" cy="45" r="45"/></clipPath>
<linearGradient id="fg9" x1="0" y1="0" x2="0" y2="1"><stop offset="0" stop-color="#a8a8a8"/><stop offset="1" stop-color="#ededed"/></linearGradient>
<linearGradient id="ng9" x1="0" y1="0" x2="0" y2="1"><stop offset="0" stop-color="#bdbdbd"/><stop offset="1" stop-color="#d6d6d6"/></linearGradient></defs>
<g clip-path="url(#cp9)"><rect width="90" height="90" fill="#efefef"/>
<path d="M35.9 57.7 Q30 60 25 60.8 Q20 59 16.8 56.2 Q20 55 21 53 Q16 51 13.3 48.4 Q15 47.5 16.4 46.4 Q12 45.5 9.75 43.7 Q16 43 19.5 41.3 Q23 38 23.4 35 Q24 20 30 12 Q37 4.3 44.5 4.3 Q58 4.3 64.7 11.7 Q71 20 71 39 Q71 52 64.7 61.6 L56.2 58.5 Z" fill="#323232"/>
<path d="M35.9 50 L56.2 50 L58.5 60 L45.2 76 L32 60 Z" fill="url(#ng9)"/>
<path d="M28.5 30 Q28 45 35 51.5 Q40 55.4 44.5 55.4 Q49 55.4 54 51.5 Q61.5 45 61.2 35 Q61 22 49.1 15.6 Q45 23 39.5 28.5 L39 24.2 Q34 28.5 28.9 28.1 Z" fill="url(#fg9)"/>
<path d="M0 90 L9.75 72.5 Q20 64 32 58.5 L45.2 74.9 L58.5 58.5 Q70 64 79.9 72.5 L90 90 Z" fill="#666666"/>
<path d="M32 58.5 L45.2 74.9 L58.5 58.5 L56.5 57.8 L45.2 71.5 L34 57.8 Z" fill="#a9a9a9"/>
</g></svg></div>
<div class="t b nm" style="left:311px;top:1470px">Julia Julia</div>
<div class="t b c n" style="left:590.0px;top:1470px;width:400px">15161516</div>
<div class="a" style="left:978px;top:1467px"><svg width="22" height="30" viewBox="0 0 22 30"><circle cx="11" cy="4.8" r="3.4" fill="#e8909f"/><path d="M7 9 H15 Q16 9 16.8 10 L21.5 17.5 Q22.2 19 20.8 19.8 Q19.5 20.4 18.7 19.2 L14.6 12.8 L18.5 22.7 H13.8 V27.5 Q13.8 29 11 29 Q8.2 29 8.2 27.5 V22.7 H3.5 L7.4 12.8 L3.3 19.2 Q2.5 20.4 1.2 19.8 Q-0.2 19 0.5 17.5 L5.2 10 Q6 9 7 9 Z" fill="#e8909f"/></svg></div>
<div class="t b c n" style="left:988.0px;top:1470px;width:400px">326598741</div>
<div class="t b c em" style="left:1344.0px;top:1470px;width:500px">julia.julie@smartclass.biz</div>
<div class="a" style="left:1905px;top:1473px"><svg width="26" height="20" viewBox="0 0 26 20"><path d="M3.5 9.5 L10.5 16.5 L22.5 4" fill="none" stroke="#4aa564" stroke-width="5" stroke-linejoin="round" stroke-linecap="round"/></svg></div>
<div class="t b c cv" style="left:2058.0px;top:1470px;width:400px">Guidance Counselor</div>
<div class="btn" style="left:2566px;top:1448px;width:158px;height:68px;background:#467bb5;border:2px solid #3e6ea5;border-radius:9px"></div>
<div class="t" style="left:2591px;top:1470px;font-size:26px;color:#fff">Actions</div>
<svg class="a" style="left:2682px;top:1478px" width="18" height="10" viewBox="0 0 18 10"><path d="M0.5 0.5 H17 L8.75 9.5 Z" fill="#fff"/></svg>
<div class="a" style="left:0;top:1400px;width:2802px;height:134px;overflow:hidden"><div class="a" style="left:410px;top:160px;width:2000px;height:100px;border-radius:50px;box-shadow:0 0 90px 20px rgba(0,0,0,0.2)"></div></div>
</body></html>
